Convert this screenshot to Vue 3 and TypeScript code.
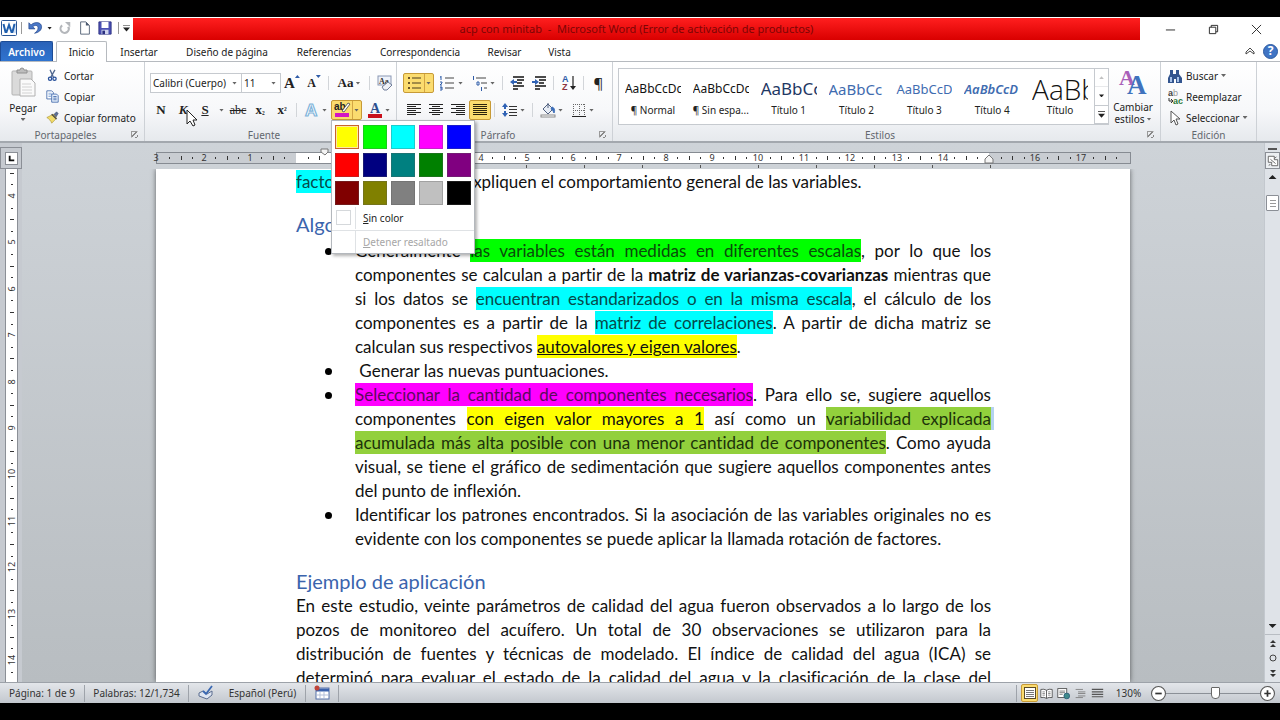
<script setup lang="ts">
import { ref } from 'vue'

type Run = { t: string; c?: string }
type Line = { runs: Run[]; last?: boolean }

const icons: Record<string, string> = {
  undo: '<path d="M1 2v7h7L5.500 6.500c3-2.500 6-1.500 6 1.500 0 2.500-2 4.500-4 6 5-1 8-3.500 8-7.500C15.500 1.500 8 0 3.500 4.500z" fill="#4a78c8" stroke="#27498c" stroke-width=".8"/>',
  redo: '<path d="M4 4a6 6 0 1 0 9 2l-2.500 1a3.500 3.500 0 1 1-5-1z" fill="#b4b7bb"/><path d="M8 1h6v6z" fill="#b4b7bb"/>',
  page: '<path d="M3 1h6l4 4v10H3z" fill="#fff" stroke="#4c5a70"/><path d="M9 1v4h4z" fill="#4c5a70"/>',
  save: '<path d="M1 1h14v14H1z" fill="#4b50b4" stroke="#2a2f80"/><path d="M4 1h8v7H4z" fill="#fff"/><path d="M4 10h8v5H4z" fill="#cfd4ee"/><path d="M5 11h3v4H5z" fill="#2a2f80"/>',
  word: '<rect x=".5" y=".5" width="15" height="15" rx="1" fill="#fff" stroke="#2b5797"/><path d="M13 3h2v10h-2z" fill="#cfdff3"/><path d="M2.500 4l2 8h1l2.500-7 2.500 7h1l2-8" fill="none" stroke="#1f5fae" stroke-width="2"/>',
  scissors: '<path d="M5 1l4 9M11 1L6 10" stroke="#51688f" stroke-width="1.600" fill="none"/><circle cx="5" cy="12" r="2" fill="none" stroke="#27509b" stroke-width="1.600"/><circle cx="10.500" cy="12" r="2" fill="none" stroke="#27509b" stroke-width="1.600"/>',
  copy: '<path d="M1 1h6l2 2v8H1z" fill="#fff" stroke="#3a62a8"/><path d="M3 4h4M3 6h4M3 8h3" stroke="#7aa0d8"/><path d="M7 5h6l2 2v8H7z" fill="#e6effb" stroke="#3a62a8"/><path d="M9 8h4M9 10h4M9 12h4" stroke="#3a62a8"/>',
  brush: '<path d="M9 5l4-4 2 2-3 5z" fill="#5c6f96" stroke="#364360" stroke-width=".6"/><path d="M1 8l8-4 4 5-6 6c-1-3-3-5-6-7z" fill="#f2dc6a" stroke="#a08b2a" stroke-width=".7"/><path d="M7 4l6 6" stroke="#444" stroke-width="1.500"/>',
  paste: '<rect x="1" y="3" width="20" height="24" rx="1" fill="#dadada" stroke="#b3b3b3"/><path d="M6 5h10V2h-3a2 2 0 0 0-4 0H6z" fill="#bdbdbd" stroke="#909090"/><path d="M9 11h11l4 4v13H9z" fill="#fafafa" stroke="#b0b0b0"/><path d="M11 16h9M11 19h10M11 22h10M11 25h10" stroke="#d2d2d2"/>',
  clear: '<rect x="1" y="1" width="13" height="9" fill="#eef2fa" stroke="#8a97b3"/><text x="2" y="9" font-size="8" font-weight="700" font-family="Liberation Serif" fill="#333">Aa</text><path d="M5 12l6-5 4 3-5 5H7z" fill="#eef1f7" stroke="#6f7d99"/>',
  bullets: '<path d="M2 2h2v2H2zM2 7h2v2H2zM2 12h2v2H2z" fill="#6b5427"/><path d="M6 3h9M6 8h9M6 13h9" stroke="#4a3c20"/>',
  numbers: '<path d="M6 3h9M6 8h9M6 13h9" stroke="#444"/><path d="M2 1v4M1 2h1M1 7h2v1L1 10h2M1 12h2v3H1M1 13h2" stroke="#2f5ca8" fill="none"/>',
  levels: '<path d="M4 3h10M9 8h6M12 13h3" stroke="#444"/><path d="M1.500 1v4M5 7h2v3H5zM9.500 12v4" stroke="#2f5ca8" fill="none"/>',
  dedent: '<path d="M4 2h11M8 5h7M8 8h5M4 11h11M4 14h5" stroke="#111" stroke-width="1.500"/><path d="M1 7l4-3v2h3v2H5v2z" fill="#2f62b5"/>',
  indent: '<path d="M4 2h11M8 5h7M8 8h5M4 11h11M4 14h5" stroke="#111" stroke-width="1.500"/><path d="M8 7L4 4v2H1v2h3v2z" fill="#2f62b5"/>',
  sort: '<text x="1" y="7" font-size="9" font-weight="700" font-family="Liberation Sans" fill="#2f5ca8">A</text><text x="1" y="15" font-size="9" font-weight="700" font-family="Liberation Sans" fill="#8d3440">Z</text><path d="M12 1v12" stroke="#222" stroke-width="1.200"/><path d="M9 11h6l-3 4z" fill="#222"/>',
  left: '<path d="M1 2.500h14M1 4.500h9M1 6.500h14M1 8.500h9M1 10.500h14M1 12.500h9" stroke="#222"/>',
  center: '<path d="M1 2.500h14M4 4.500h8M1 6.500h14M4 8.500h8M1 10.500h14M4 12.500h8" stroke="#222"/>',
  right: '<path d="M1 2.500h14M6 4.500h9M1 6.500h14M6 8.500h9M1 10.500h14M6 12.500h9" stroke="#222"/>',
  justify: '<path d="M1 2.500h14M1 4.500h14M1 6.500h14M1 8.500h14M1 10.500h14M1 12.500h14" stroke="#2a220c"/>',
  spacing: '<path d="M7 4.500h8M7 7.500h8M7 10.500h8M7 13.500h8" stroke="#333"/><path d="M3 1l3 4H4v2H2V5H0zM3 15l3-4H4V9H2v2H0z" fill="#2f62b5"/>',
  bucket: '<path d="M3 7l5-5 5 5-5 5z" fill="#e8edf5" stroke="#50607f"/><path d="M8 6V1" stroke="#50607f"/><path d="M12 5c3 1 3 4 2 6-1-2-1-3-3-4z" fill="#3b6db8" stroke="#3b6db8"/><rect x="1" y="13" width="14" height="2" fill="#fff" stroke="#8a8a8a"/>',
  border: '<path d="M2 2.500h12M2 8.500h12M2.500 2v12M8.500 2v12M13.500 2v12" stroke="#666" stroke-dasharray="1 1"/><path d="M1 14.500h14" stroke="#222"/>',
  mark: '<text x="0" y="8" font-size="10" font-weight="700" font-family="Liberation Sans" fill="#222">ab</text><path d="M8 9l6-8 2 1-6 8z" fill="#fff" stroke="#444" stroke-width=".8"/><rect x="1" y="11" width="14" height="4" fill="#d414c4"/>',
  color: '<text x="3" y="11" font-size="14" font-weight="700" font-family="Liberation Serif" fill="#2c4f8f">A</text><rect x="1" y="12" width="14" height="4" fill="#c8101c"/>',
  effects: '<text x="1" y="14" font-size="17" font-weight="700" font-family="Liberation Sans" fill="#fff" stroke="#7fb4da" stroke-width="1.200">A</text>',
  styles: '<text x="0" y="17" font-size="22" font-weight="700" font-family="Liberation Serif" fill="#a85fb8">A</text><text x="8" y="26" font-size="27" font-weight="700" font-family="Liberation Serif" fill="#3f72bd">A</text>',
  find: '<path d="M3 2h3v4h3V2h3v4l3 4v5H9v-4H7v4H1v-5l2-4z" fill="#33558f"/><path d="M3 9h2v5H3zM10 9h2v5h-2z" fill="#a8c3ea"/>',
  replace: '<text x="1" y="7" font-size="9" font-weight="700" font-family="Liberation Sans" fill="#444">a</text><text x="6" y="7" font-size="9" font-family="Liberation Sans" fill="#999">b</text><path d="M2 9v3h3M4 10l2 2-2 2" stroke="#333" fill="none"/><text x="6" y="15" font-size="9" font-weight="700" font-family="Liberation Sans" fill="#2d7b3a">ac</text>',
  pointer: '<path d="M4 1v12l3-3 2 5 2-1-2-5h4z" fill="#fff" stroke="#555"/>',
  proof: '<path d="M1 8l4-2 4 3 5-3v4l-5 4-8-3z" fill="#dfe6f2" stroke="#5a6c8f"/><path d="M5 6l3 3 6-8" stroke="#3a68b2" stroke-width="1.800" fill="none"/>',
  macro: '<rect x="2" y="3" width="13" height="11" fill="#fff" stroke="#5470a8"/><path d="M2 5h13" stroke="#3b62ac" stroke-width="3"/><path d="M6 7v6M10 7v6M3 10h11" stroke="#b3bfd9"/><circle cx="3" cy="3" r="2.500" fill="#c0453a"/>',
  vPrint: '<rect x="2.500" y="2.500" width="11" height="11" fill="#fff" stroke="#5a4a28"/><path d="M4 5.500h8M4 7.500h8M4 9.500h8M4 11.500h8" stroke="#777"/>',
  vRead: '<path d="M1 3q4-1 7 1 3-2 7-1v10q-4-1-7 1-3-2-7-1zM8 4v10" fill="#fff" stroke="#444"/><path d="M3 6h3M3 8h3M3 10h3M10 6h3M10 8h3M10 10h3" stroke="#777"/>',
  vWeb: '<rect x="1" y="2" width="11" height="11" fill="#fff" stroke="#444"/><path d="M3 5h7M3 7h7M3 9h4" stroke="#666"/><circle cx="12" cy="11" r="3.500" fill="#3f8a8a" stroke="#2a5a78"/>',
  vOutline: '<path d="M2 3h9M5 6h9M5 8h9M5 11h9M2 13h9" stroke="#777"/>',
  vDraft: '<path d="M1 3h14M1 6h14M1 9h14M1 12h14" stroke="#555" stroke-width="1.400"/>',
}

const qat = ['undo', 'redo', 'page', 'save']
const tabs = ['Inicio', 'Insertar', 'Diseño de página', 'Referencias', 'Correspondencia', 'Revisar', 'Vista']
const clipboard = [
  { icon: 'scissors', label: 'Cortar' },
  { icon: 'copy', label: 'Copiar' },
  { icon: 'brush', label: 'Copiar formato' },
]
const editing = [
  { icon: 'find', label: 'Buscar', caret: true },
  { icon: 'replace', label: 'Reemplazar', caret: false },
  { icon: 'pointer', label: 'Seleccionar', caret: true },
]
const styles = [
  { p: 'AaBbCcDc', n: '¶ Normal', c: 's-normal' },
  { p: 'AaBbCcDc', n: '¶ Sin espa...', c: 's-normal' },
  { p: 'AaBbCc', n: 'Título 1', c: 's-h1' },
  { p: 'AaBbCc', n: 'Título 2', c: 's-h2' },
  { p: 'AaBbCcD', n: 'Título 3', c: 's-h3' },
  { p: 'AaBbCcD', n: 'Título 4', c: 's-h4' },
  { p: 'AaBb', n: 'Título', c: 's-title' },
]
const swatches = [
  '#ffff00', '#00ff00', '#00ffff', '#ff00ff', '#0000ff',
  '#ff0000', '#000080', '#008080', '#008000', '#800080',
  '#800000', '#808000', '#808080', '#c0c0c0', '#000000',
]

const one = (t: string, last = false): Line => ({ runs: [{ t }], last })
const items: Line[][] = [
  [
    { runs: [{ t: 'Generalmente ' }, { t: 'las variables están medidas en diferentes escalas', c: 'green' }, { t: ', por lo que los' }] },
    { runs: [{ t: 'componentes se calculan a partir de la ' }, { t: 'matriz de varianzas-covarianzas', c: 'bold' }, { t: ' mientras que' }] },
    { runs: [{ t: 'si los datos se ' }, { t: 'encuentran estandarizados o en la misma escala', c: 'cyan' }, { t: ', el cálculo de los' }] },
    { runs: [{ t: 'componentes es a partir de la ' }, { t: 'matriz de correlaciones', c: 'cyan' }, { t: '. A partir de dicha matriz se' }] },
    { runs: [{ t: 'calculan sus respectivos ' }, { t: 'autovalores y eigen valores', c: 'yellow under' }, { t: '.' }], last: true },
  ],
  [one('\u00a0Generar las nuevas puntuaciones.', true)],
  [
    { runs: [{ t: 'Seleccionar la cantidad de componentes necesarios', c: 'magenta' }, { t: '. Para ello se, sugiere aquellos' }] },
    { runs: [{ t: 'componentes ' }, { t: 'con eigen valor mayores a 1', c: 'yellow' }, { t: ' así como un ' }, { t: 'variabilidad explicada', c: 'olive tail' }] },
    { runs: [{ t: 'acumulada más alta posible con una menor cantidad de componentes', c: 'olive' }, { t: '. Como ayuda' }] },
    one('visual, se tiene el gráfico de sedimentación que sugiere aquellos componentes antes'),
    one('del punto de inflexión.', true),
  ],
  [
    one('Identificar los patrones encontrados. Si la asociación de las variables originales no es'),
    one('evidente con los componentes se puede aplicar la llamada rotación de factores.', true),
  ],
]
const study: Line[] = [
  one('En este estudio, veinte parámetros de calidad del agua fueron observados a lo largo de los'),
  one('pozos de monitoreo del acuífero. Un total de 30 observaciones se utilizaron para la'),
  one('distribución de fuentes y técnicas de modelado. El índice de calidad del agua (ICA) se'),
  one('determinó para evaluar el estado de la calidad del agua y la clasificación de la clase del'),
]

const CM = 46.2
const hMarks = Array.from({ length: 85 }, (_, i) => i - 12)
  .map((q) => ({ q, x: Math.round(140 + (q * CM) / 4) }))
  .filter((m) => m.x > 2 && m.x < 970 && m.q !== 0 && m.q !== 60)
const tabStops = Array.from({ length: 12 }, (_, i) => 196 + i * 58)
const vMarks = Array.from({ length: 160 }, (_, i) => i + 14).map((q) => ({ q, y: Math.round(27 + ((q - 16) * 46.4) / 4) }))

const fontName = ref('Calibri (Cuerpo)')
const fontSize = ref('11')
const zoom = ref(53)
</script>

<template>
  <div class="app">
    <header class="titlebar">
      <div class="qat">
        <svg class="ic" viewBox="0 0 16 16" v-html="icons.word" />
        <i class="vsep" />
        <template v-for="q in qat" :key="q">
          <button class="qbtn" :aria-label="q"><svg class="ic14" viewBox="0 0 16 16" v-html="icons[q]" /></button>
          <i v-if="q === 'undo'" class="caret dark" />
        </template>
        <i class="vsep" />
        <i class="caret dark bar" />
      </div>
      <div class="title">acp con minitab&nbsp; -&nbsp; Microsoft Word (Error de activación de productos)</div>
      <div class="winbtns">
        <button aria-label="Minimizar"><svg viewBox="0 0 12 12"><path d="M1 6.500h10" stroke="#222" /></svg></button>
        <button aria-label="Restaurar"><svg viewBox="0 0 12 12"><path d="M1.500 3.500h7v7h-7zM3.500 3.500v-2h7v7h-2" fill="none" stroke="#222" /></svg></button>
        <button aria-label="Cerrar"><svg viewBox="0 0 12 12"><path d="M1 1l10 10M11 1L1 11" stroke="#222" /></svg></button>
      </div>
    </header>

    <nav class="tabs">
      <button class="file">Archivo</button>
      <button v-for="(t, i) in tabs" :key="t" class="tab" :class="{ active: i === 0 }">{{ t }}</button>
      <span class="grow" />
      <button class="plain" aria-label="Minimizar la cinta">
        <svg class="ic10" viewBox="0 0 10 10"><path d="M1 6l4-4 4 4v2L5 5 1 8z" fill="#fff" stroke="#333" stroke-width=".9" /></svg>
      </button>
      <button class="help" aria-label="Ayuda">?</button>
    </nav>

    <section class="ribbon">
      <div class="group g-clip">
        <div class="body clip">
          <button class="big">
            <svg class="paste" viewBox="0 0 25 29" v-html="icons.paste" />
            <span>Pegar</span><i class="caret" />
          </button>
          <div class="stack">
            <button v-for="c in clipboard" :key="c.label"><svg class="ic12" viewBox="0 0 16 16" v-html="icons[c.icon]" />{{ c.label }}</button>
          </div>
        </div>
        <div class="glabel"><span>Portapapeles</span><i class="launch" /></div>
      </div>

      <div class="group g-font">
        <div class="body rows">
          <div class="row">
            <label class="combo w92"><select v-model="fontName" aria-label="Fuente"><option>Calibri (Cuerpo)</option></select><i class="caret" /></label>
            <label class="combo w39"><select v-model="fontSize" aria-label="Tamaño"><option>11</option></select><i class="caret" /></label>
            <button class="cell serif grow-a">A<i class="caret blue up" /></button>
            <button class="cell serif shrink-a">A<i class="caret blue" /></button>
            <i class="sep" />
            <button class="cell w34 serif aa">Aa<i class="caret" /></button>
            <i class="sep" />
            <button class="cell w24" aria-label="Borrar formato"><svg class="ic" viewBox="0 0 16 16" v-html="icons.clear" /></button>
          </div>
          <div class="row">
            <button class="cell serif b">N</button>
            <button class="cell serif b it">K</button>
            <button class="cell serif b un">S</button>
            <button class="cell w11" aria-label="Más subrayados"><i class="caret" /></button>
            <button class="cell serif st">abc</button>
            <button class="cell serif b">x<sub>₂</sub></button>
            <button class="cell serif b">x<sup>²</sup></button>
            <i class="sep" />
            <button class="cell w32" aria-label="Efectos de texto"><svg class="ic" viewBox="0 0 16 16" v-html="icons.effects" /><i class="caret" /></button>
            <div class="markwrap">
              <button class="cell w31 on split" aria-label="Color de resaltado"><svg class="ic" viewBox="0 0 16 16" v-html="icons.mark" /><i class="caret" /></button>
              <div class="menu">
                <div class="swatches">
                  <button v-for="(s, i) in swatches" :key="s" :aria-label="s" :class="{ sel: i === 0 }" :style="{ backgroundColor: s }" />
                </div>
                <button class="mrow"><i class="blank" /><span><u>S</u>in color</span></button>
                <button class="mrow off" disabled><i /><span><u>D</u>etener resaltado</span></button>
              </div>
            </div>
            <button class="cell w33" aria-label="Color de fuente"><svg class="ic" viewBox="0 0 16 16" v-html="icons.color" /><i class="caret" /></button>
          </div>
        </div>
        <div class="glabel"><span>Fuente</span><i class="launch" /></div>
      </div>

      <div class="group g-par">
        <div class="body rows">
          <div class="row">
            <button class="cell w31 on split" aria-label="Viñetas"><svg class="ic" viewBox="0 0 16 16" v-html="icons.bullets" /><i class="caret" /></button>
            <button class="cell w34 sp" aria-label="Numeración"><svg class="ic" viewBox="0 0 16 16" v-html="icons.numbers" /><i class="caret" /></button>
            <button class="cell w31" aria-label="Lista multinivel"><svg class="ic" viewBox="0 0 16 16" v-html="icons.levels" /><i class="caret" /></button>
            <i class="sep" />
            <button class="cell" aria-label="Disminuir sangría"><svg class="ic" viewBox="0 0 16 16" v-html="icons.dedent" /></button>
            <button class="cell" aria-label="Aumentar sangría"><svg class="ic" viewBox="0 0 16 16" v-html="icons.indent" /></button>
            <i class="sep" />
            <button class="cell w24" aria-label="Ordenar"><svg class="ic" viewBox="0 0 16 16" v-html="icons.sort" /></button>
            <i class="sep" />
            <button class="cell w24 pil">¶</button>
          </div>
          <div class="row">
            <button class="cell" aria-label="Izquierda"><svg class="ic" viewBox="0 0 16 16" v-html="icons.left" /></button>
            <button class="cell" aria-label="Centrar"><svg class="ic" viewBox="0 0 16 16" v-html="icons.center" /></button>
            <button class="cell" aria-label="Derecha"><svg class="ic" viewBox="0 0 16 16" v-html="icons.right" /></button>
            <button class="cell on" aria-label="Justificar"><svg class="ic" viewBox="0 0 16 16" v-html="icons.justify" /></button>
            <i class="sep" />
            <button class="cell w32" aria-label="Interlineado"><svg class="ic" viewBox="0 0 16 16" v-html="icons.spacing" /><i class="caret" /></button>
            <i class="sep" />
            <button class="cell w32" aria-label="Sombreado"><svg class="ic" viewBox="0 0 16 16" v-html="icons.bucket" /><i class="caret" /></button>
            <button class="cell w32" aria-label="Bordes"><svg class="ic" viewBox="0 0 16 16" v-html="icons.border" /><i class="caret" /></button>
          </div>
        </div>
        <div class="glabel"><span>Párrafo</span><i class="launch" /></div>
      </div>

      <div class="group g-styles">
        <div class="body stylesbody">
          <div class="gallery">
            <button v-for="s in styles" :key="s.n" class="style"><span class="prev" :class="s.c">{{ s.p }}</span><span class="sname">{{ s.n }}</span></button>
            <div class="arrows">
              <button class="dim" aria-label="Arriba"><i class="caret up" /></button>
              <button aria-label="Abajo"><i class="caret dark" /></button>
              <button aria-label="Más"><i class="caret dark bar" /></button>
            </div>
          </div>
          <button class="big change">
            <svg class="bigA" viewBox="0 0 28 27" v-html="icons.styles" />
            <span>Cambiar</span><span>estilos<i class="caret" /></span>
          </button>
        </div>
        <div class="glabel"><span>Estilos</span><i class="launch" /></div>
      </div>

      <div class="group g-edit">
        <div class="body">
          <div class="stack">
            <button v-for="e in editing" :key="e.label"><svg class="ic" viewBox="0 0 16 16" v-html="icons[e.icon]" />{{ e.label }}<i v-if="e.caret" class="caret" /></button>
          </div>
        </div>
        <div class="glabel"><span>Edición</span></div>
      </div>
      <svg class="cursor" viewBox="0 0 12 18"><path d="M1 1v14l3-3 3 5 2-1-2-5h4z" fill="#fff" stroke="#222" /></svg>
    </section>

    <main class="work">
      <aside class="vside">
        <button class="corner" aria-label="Tabulación"><svg viewBox="0 0 12 12"><path d="M4 3v5h5" fill="none" stroke="#111" stroke-width="2" /></svg></button>
        <div class="vruler">
          <svg width="12" height="1800" font-family="Noto Sans" font-size="9" fill="#333">
            <template v-for="m in vMarks" :key="m.q">
              <text v-if="m.q % 4 === 0" :transform="`translate(9 ${m.y}) rotate(-90)`" text-anchor="middle">{{ m.q / 4 }}</text>
              <rect v-else-if="m.q % 2 === 0" x="4" :y="m.y" width="4" height="1" />
              <rect v-else x="5" :y="m.y" width="2" height="1" />
            </template>
          </svg>
        </div>
      </aside>

      <div class="canvas">
        <svg class="hruler" viewBox="0 0 974 26" font-family="Noto Sans" font-size="9" fill="#333">
          <rect x=".5" y="9.500" width="974" height="11" fill="#c9cdd2" stroke="#868b92" />
          <rect x="140" y="10" width="693" height="10" fill="#fff" />
          <text x="0" y="18" text-anchor="middle">3</text>
          <template v-for="m in hMarks" :key="m.q">
            <text v-if="m.q % 4 === 0" :x="m.x" y="18" text-anchor="middle">{{ Math.abs(m.q / 4) }}</text>
            <rect v-else-if="m.q % 2 === 0" :x="m.x" y="13" width="1" height="4" />
            <rect v-else :x="m.x" y="14" width="1" height="2" />
          </template>
          <rect v-for="t in tabStops" :key="t" :x="t" y="22" width="1" height="3" fill="#555" />
          <path d="M165 6h7v3l-3 3-4-3z" fill="#f4f4f4" stroke="#777" />
          <path d="M829 20v-4l4-4 4 4v4z" fill="#f4f4f4" stroke="#777" />
        </svg>
        <article class="sheet">
          <p class="line first"><span class="cyan">factores</span> comunes que expliquen el comportamiento general de las variables.</p>
          <h2 class="h-alg">Algoritmo</h2>
          <ul>
            <li v-for="(it, i) in items" :key="i">
              <div v-for="(l, j) in it" :key="j" class="line" :class="{ last: l.last }"><span v-for="(r, k) in l.runs" :key="k" :class="r.c">{{ r.t }}</span></div>
            </li>
          </ul>
          <h2 class="h-ej">Ejemplo de aplicación</h2>
          <div v-for="(l, j) in study" :key="j" class="line">{{ l.runs[0].t }}</div>
        </article>
      </div>

      <aside class="scroll">
        <i class="splitter" />
        <button class="rtoggle" aria-label="Regla"><svg viewBox="0 0 14 14"><path d="M1.500 1.500h7v4h4v7h-7v-4h-4z" fill="#fff" stroke="#555" /><path d="M4 5l6 5M9 4l2-2M4 11l-2 1" stroke="#555" /></svg></button>
        <button class="sb" aria-label="Subir"><i class="caret dark up lg" /></button>
        <div class="track"><i class="thumb" /></div>
        <button class="sb" aria-label="Bajar"><i class="caret dark lg" /></button>
        <button class="nav top" aria-label="Página anterior"><svg viewBox="0 0 8 8"><path d="M1 4l3-3 3 3zM1 8l3-3 3 3z" fill="#333" /></svg></button>
        <button class="nav" aria-label="Examinar"><svg viewBox="0 0 8 8"><circle cx="4" cy="4" r="3" fill="none" stroke="#444" /></svg></button>
        <button class="nav" aria-label="Página siguiente"><svg viewBox="0 0 8 8"><path d="M1 0h6L4 3zM1 4h6L4 7z" fill="#333" /></svg></button>
      </aside>
    </main>

    <footer class="status">
      <button class="c1">Página: 1 de 9</button>
      <button class="c2">Palabras: 12/1,734</button>
      <button class="c3"><svg class="ic" viewBox="0 0 16 16" v-html="icons.proof" />Español (Perú)</button>
      <button class="c4" aria-label="Macros"><svg class="ic" viewBox="0 0 16 16" v-html="icons.macro" /></button>
      <span class="grow" />
      <div class="views">
        <button class="on" aria-label="Diseño de impresión"><svg class="ic" viewBox="0 0 16 16" v-html="icons.vPrint" /></button>
        <button v-for="v in ['vRead', 'vWeb', 'vOutline', 'vDraft']" :key="v" :aria-label="v"><svg class="ic12" viewBox="0 0 16 16" v-html="icons[v]" /></button>
      </div>
      <span class="pct">130%</span>
      <button class="round" aria-label="Alejar"><svg viewBox="0 0 14 14"><circle cx="7" cy="7" r="6.500" fill="#fff" stroke="#555" /><path d="M4 7h6" stroke="#333" stroke-width="1.600" /></svg></button>
      <input v-model="zoom" class="range" type="range" min="0" max="100" aria-label="Zoom" />
      <button class="round" aria-label="Acercar"><svg viewBox="0 0 14 14"><circle cx="7" cy="7" r="6.500" fill="#fff" stroke="#555" /><path d="M4 7h6M7 4v6" stroke="#333" stroke-width="1.600" /></svg></button>
    </footer>
  </div>
</template>

<style>
body { background: #000; }
</style>

<style scoped>
* { box-sizing: border-box; }
.app {
  height: 100vh; min-height: 400px; padding: 17px 0; background: #000;
  display: flex; flex-direction: column; overflow: hidden;
  font: 10px/14px "Noto Sans", "Open Sans", sans-serif; color: #222;
}
button { font: inherit; color: inherit; background: none; border: 0; padding: 0; margin: 0; display: flex; align-items: center; justify-content: center; white-space: nowrap; }
svg { display: block; flex: none; overflow: visible; }
.ic { width: 16px; height: 16px; }
.ic14 { width: 14px; height: 14px; }
.ic12 { width: 13px; height: 13px; }
.ic10 { width: 10px; height: 10px; }
.grow { flex: 1; }
.caret { flex: none; display: block; width: 5px; height: 3px; background: #666; clip-path: polygon(0 0, 100% 0, 50% 100%); }
.caret.dark { background: #222; }
.caret.blue { background: #2f5ca8; align-self: flex-start; margin-top: 2px; }
.caret.up { clip-path: polygon(50% 0, 100% 100%, 0 100%); }
.caret.bar { width: 7px; height: 7px; clip-path: polygon(0 0, 100% 0, 100% 1px, 0 1px, 0 3px, 100% 3px, 50% 100%, 0 3px); }
.caret.lg { width: 8px; height: 4px; }

.titlebar { flex: none; height: 24px; background: #fff; display: flex; }
.qat { width: 133px; display: flex; align-items: center; padding: 0 3px 2px 1px; justify-content: space-between; }
.qbtn { width: 16px; height: 16px; }
.vsep { width: 1px; height: 12px; background: #999; }
.title { flex: 1; margin: 1px 0; background: linear-gradient(#ff1f1f, #d90000); color: #7d0505; text-align: center; font-size: 11px; line-height: 22px; white-space: nowrap; overflow: hidden; }
.winbtns { width: 140px; display: flex; padding-left: 9px; }
.winbtns button { width: 43px; }
.winbtns svg { width: 11px; height: 11px; }

.tabs { flex: none; height: 21px; background: #fff; border-bottom: 1px solid #b6babf; display: flex; align-items: stretch; padding-right: 2px; }
.file { width: 53px; margin-right: 3px; background: linear-gradient(#2a62b8, #2f74d0); color: #fff; font-weight: 600; border: 1px solid #1d4c96; border-bottom: 0; border-radius: 2px 2px 0 0; }
.tab { width: 112px; padding-top: 1px; }
.tab:nth-child(2) { width: 51px; }
.tab:nth-child(3) { width: 64px; }
.tab:nth-child(5) { width: 82px; }
.tab:nth-child(6) { width: 110px; }
.tab:nth-child(7) { width: 59px; }
.tab:nth-child(8) { width: 51px; }
.tab.active { border: 1px solid #b6babf; border-bottom: 0; border-radius: 2px 2px 0 0; margin-bottom: -1px; padding-top: 0; background: #fff; }
.plain { margin-right: 8px; }
.help { width: 15px; height: 15px; align-self: center; border-radius: 50%; background: #3f74c4; border: 1px solid #2d5aa0; color: #fff; font-weight: 700; font-size: 12px; }

.ribbon { flex: none; height: 81px; background: linear-gradient(#fff, #f7f8fa 60%, #e6e9ed); border-bottom: 2px solid #a3a8ae; display: flex; position: relative; z-index: 5; }
.group { flex: none; display: flex; flex-direction: column; border-right: 1px solid #cdd1d6; }
.g-clip { width: 145px; }
.g-font { width: 252px; }
.g-par { width: 216px; }
.g-styles { flex: 1 1 548px; min-width: 0; }
.g-edit { width: 96px; margin-right: 23px; }
.body { flex: 1; min-height: 0; }
.glabel { flex: none; height: 13px; display: flex; align-items: center; text-align: center; color: #62676e; }
.glabel span { flex: 1; }
.launch { width: 7px; height: 7px; margin-right: 6px; border: 1px solid #999; border-right-color: transparent; border-bottom-color: transparent; background: linear-gradient(135deg, transparent 40%, #888 40%, #888 60%, transparent 60%); }
.clip { display: flex; }
.big { width: 46px; flex-direction: column; justify-content: flex-start; padding-top: 6px; }
.big .caret { margin-top: 3px; }
.paste { width: 25px; height: 29px; margin-bottom: 4px; }
.stack { padding-top: 3px; }
.stack button { height: 21px; gap: 5px; }
.g-edit .stack { padding-left: 6px; }
.g-edit .stack button { gap: 3px; }
.rows { padding: 11px 0 0 5px; display: flex; flex-direction: column; gap: 7px; }
.g-par .rows { padding-left: 6px; }
.row { display: flex; height: 20px; align-items: center; }
.combo { position: relative; height: 20px; border: 1px solid #c6cacf; background: #fff; display: flex; align-items: center; padding-right: 4px; }
.combo + .combo { border-left: 0; }
.combo select { appearance: none; border: 0; background: none; font: inherit; color: #222; padding: 0 0 0 2px; flex: 1; min-width: 0; height: 18px; outline: 0; }
.w92 { width: 92px; }
.w39 { width: 39px; }
.sep { flex: none; width: 1px; height: 14px; background: #d2d5d9; margin: 0 3px; }
.cell { flex: none; width: 22px; height: 20px; gap: 2px; }
.w11 { width: 11px; }
.w24 { width: 23px; }
.w31 { width: 31px; }
.w32 { width: 31px; }
.w33 { width: 33px; }
.w34 { width: 34px; }
.serif { font-family: "Liberation Serif", serif; color: #222; font-size: 13px; gap: 0; }
.b { font-weight: 700; }
.it { font-style: italic; }
.un { text-decoration: underline; }
.st { text-decoration: line-through; font-size: 12px; }
.serif sub, .serif sup { font-size: 9px; line-height: 1; }
.grow-a { font-size: 15px; font-weight: 700; }
.shrink-a { font-size: 12px; font-weight: 700; }
.aa { font-size: 13px; font-weight: 700; gap: 2px; }
.pil { font-size: 15px; }
.on { background: #fbdc6f; border: 1px solid #c79a36; border-radius: 2px; }
.split { background: linear-gradient(90deg, #fbdc6f 20px, #d3a544 20px, #d3a544 21px, #fbdc6f 21px); gap: 4px; }
.sp { gap: 3px; }
.markwrap { position: relative; }
.menu { position: absolute; left: 0; top: 20px; width: 144px; padding: 4px 0 0; background: #fff; border: 1px solid #b4b8bd; box-shadow: 2px 2px 3px rgba(0, 0, 0, .3); z-index: 10; }
.swatches { display: grid; grid-template-columns: repeat(5, 24px); gap: 4px; padding: 0 3px; margin-bottom: 1px; }
.swatches button { height: 24px; border: 1px solid rgba(90, 90, 90, .3); }
.swatches .sel { border: 1px solid #c8642c; box-shadow: inset 0 0 0 1px #ffe7a0; }
.mrow { width: 100%; height: 24px; justify-content: flex-start; color: #222; }
.mrow i { width: 24px; height: 22px; border-right: 1px solid #dfe2e5; margin-right: 7px; }
.mrow .blank { background: linear-gradient(#fff, #fff) 5px 4px / 13px 13px no-repeat, linear-gradient(#d5d8db, #d5d8db) 4px 3px / 15px 15px no-repeat; }
.mrow span { flex: 1; text-align: left; }
.mrow.off { height: 23px; color: #a6a6a6; border-top: 1px solid #dfe2e5; }

.stylesbody { display: flex; padding: 6px 0 0 5px; }
.gallery { flex: 0 1 491px; height: 57px; border: 1px solid #c6cacf; background: #fff; display: flex; overflow: hidden; }
.style { flex: 1 1 68px; min-width: 0; flex-direction: column; justify-content: flex-start; padding: 6px 6px 0; }
.prev { width: 56px; height: 28px; line-height: 28px; overflow: hidden; text-align: left; color: #111; }
.sname { width: 66px; text-align: center; }
.s-normal { font-size: 12px; }
.s-h1 { font-size: 17px; color: #1f3864; }
.s-h2 { font-size: 15px; color: #3f6cb0; }
.s-h3 { font-size: 13px; color: #3f6cb0; }
.s-h4 { font-size: 13px; color: #3f6cb0; font-style: italic; font-weight: 600; }
.s-title { font-size: 28px; font-family: "Open Sans", sans-serif; font-weight: 300; }
.arrows { width: 14px; flex: none; display: flex; flex-direction: column; border-left: 1px solid #c6cacf; }
.arrows button { flex: 1; border-bottom: 1px solid #c6cacf; }
.dim { opacity: .4; }
.change { width: 48px; padding-top: 0; }
.bigA { width: 28px; height: 27px; margin-bottom: 6px; }
.change span { line-height: 12px; display: flex; align-items: center; gap: 2px; }
.change .caret { margin-top: 0; }
.cursor { position: absolute; left: 186px; top: 47px; width: 12px; height: 18px; }

.work { flex: 1; min-height: 0; display: flex; background: linear-gradient(#ced3d8, #b8bdc1); }
.vside { width: 22px; flex: none; display: flex; flex-direction: column; align-items: center; background: #c6cad0; }
.corner { margin-top: 4px; width: 22px; height: 22px; flex: none; border: 1px solid #8b8f96; }
.corner svg { width: 13px; height: 13px; border: 1px solid #8b8f96; background: #fff; }
.vruler { flex: 1; min-height: 0; width: 13px; background: #fff; border: solid #8b8f96; border-width: 0 1px; overflow: hidden; }
.canvas { flex: 1; min-width: 0; display: flex; flex-direction: column; align-items: center; overflow: hidden; }
.hruler { width: 974px; height: 26px; }
.sheet { flex: 1; min-height: 0; width: 974px; background: #fff; box-shadow: 0 0 5px rgba(0, 0, 0, .55); padding: 1px 139px 0 140px; overflow: hidden; clip-path: inset(0 -8px 0 -8px); font: 17px/24px Lato, sans-serif; font-variant-ligatures: none; color: #111; }
.line { height: 24px; text-align: justify; text-align-last: justify; white-space: nowrap; margin: 0; }
.line.last { text-align-last: left; }
.first { width: 564px; }
h2 { margin: 0; font-size: 20px; font-weight: 400; line-height: 26px; color: #3a64ad; }
.h-alg { margin-top: 17px; }
.h-ej { margin-top: 17px; }
ul { margin: 2px 0 0; padding: 0 0 0 59px; list-style: none; }
li { position: relative; }
li::before { content: ""; position: absolute; left: -30px; top: 9px; width: 7px; height: 7px; border-radius: 50%; background: #000; }
.line span { padding: 1px 0; }
.green { background: #0f0; color: #0a4a0a; }
.cyan { background: #0ff; color: #064a4a; }
.yellow { background: #ff0; }
.under { text-decoration: underline; }
.magenta { background: #f0f; color: #5c0a5c; }
.olive { background: #92d03c; color: #1c330a; }
.tail { box-shadow: 3px 0 0 #b4d3f0; }
.bold { font-weight: 700; }

.scroll { width: 16px; flex: none; display: flex; flex-direction: column; align-items: center; background: #dfe3e8; border-left: 1px solid #c3c8ce; }
.splitter { width: 9px; height: 2px; background: #555; margin: 5px 0 2px; }
.rtoggle { width: 15px; height: 17px; border: 1px solid #8b8f96; background: #eceff2; }
.rtoggle svg { width: 12px; height: 12px; }
.sb { height: 16px; width: 16px; }
.track { flex: 1; width: 100%; padding: 10px 0 0 1px; }
.thumb { display: block; width: 13px; height: 16px; border: 1px solid #8b8f96; border-radius: 1px; background: repeating-linear-gradient(#999 0 1px, #fff 1px 3px) 3px 4px / 6px 7px no-repeat #fff; }
.nav { height: 16px; width: 15px; }
.nav.top { border-top: 1px solid #b8bdc3; }
.nav svg { width: 8px; height: 8px; }

.status { flex: none; height: 21px; display: flex; align-items: center; background: linear-gradient(#e3e6ea, #c3c8ce); border-top: 1px solid #9da2a9; color: #333; padding-right: 5px; }
.c1, .c2, .c3, .c4 { height: 17px; border-right: 1px solid #9ea3aa; }
.c1 { width: 85px; }
.c2 { width: 104px; }
.c3 { width: 117px; gap: 15px; }
.c4 { width: 33px; }
.views { display: flex; align-items: center; border-left: 1px solid #9ea3aa; padding-left: 4px; height: 17px; }
.views button { width: 17px; height: 18px; }
.pct { width: 45px; text-align: center; }
.round { width: 15px; height: 15px; }
.round svg { width: 15px; height: 15px; }
.range { appearance: none; width: 94px; height: 16px; margin: 0; background: linear-gradient(#8b9097, #8b9097) 0 8px / 100% 1px no-repeat; }
.range::-webkit-slider-thumb { appearance: none; width: 9px; height: 12px; background: #fff; border: 1px solid #666; border-radius: 1px 1px 4px 4px; }
</style>
